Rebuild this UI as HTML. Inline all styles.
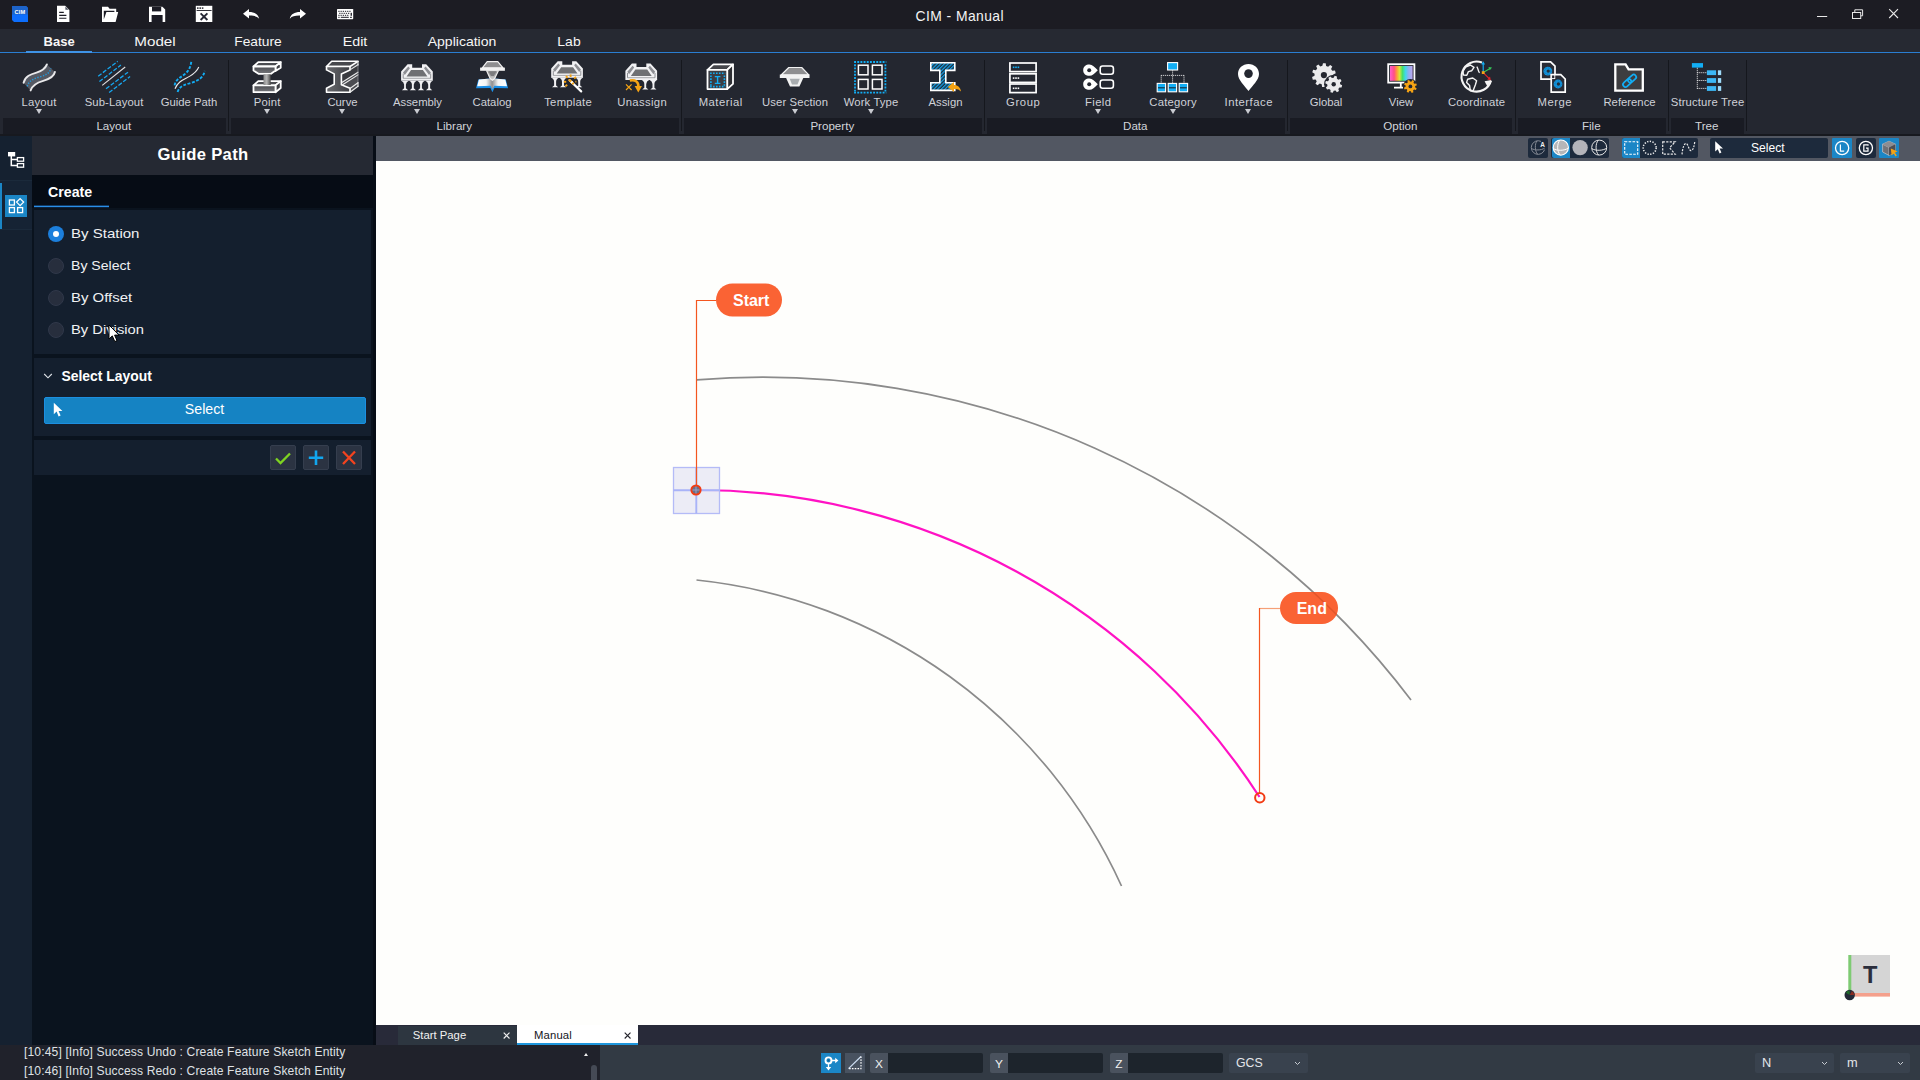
<!DOCTYPE html>
<html>
<head>
<meta charset="utf-8">
<title>CIM - Manual</title>
<style>
*{box-sizing:border-box;margin:0;padding:0}
html,body{width:1920px;height:1080px;overflow:hidden;background:#1f222c;font-family:"Liberation Sans",sans-serif;color:#e8e8ea}
.t{position:absolute;white-space:nowrap}
.b{position:absolute}
svg{position:absolute;overflow:visible}
</style>
</head>
<body>
<div class="b" style="left:0px;top:0px;width:1920px;height:29px;background:#1c1c23;"></div>
<div class="t" style="left:959.8px;top:6.88px;height:18px;line-height:18px;font-size:13.9px;color:#f4f4f4;letter-spacing:0.42px;transform:translateX(-50%);">CIM - Manual</div>
<div class="b" style="left:0px;top:29px;width:1920px;height:23px;background:#262932;"></div>
<div class="b" style="left:0px;top:53px;width:1920px;height:65px;background:#242730;"></div>
<div class="b" style="left:0px;top:118px;width:1920px;height:16px;background:#242730;"></div>
<div class="b" style="left:0px;top:134px;width:1920px;height:2px;background:#17191f;"></div>
<div class="b" style="left:0px;top:52px;width:1920px;height:1px;background:#2a7ed2;"></div>
<div class="b" style="left:26px;top:51px;width:66px;height:2px;background:#3f93e6;"></div>
<div class="t" style="left:59.1px;top:33.30px;height:17px;line-height:17px;font-size:13.0px;color:#f6f6f6;font-weight:bold;transform:translateX(-50%);">Base</div>
<div class="t" style="left:155.25px;top:34.00px;height:17px;line-height:17px;font-size:12.7px;color:#f6f6f6;transform:translateX(-50%) scaleX(1.197);">Model</div>
<div class="t" style="left:258px;top:34.00px;height:17px;line-height:17px;font-size:12.7px;color:#f6f6f6;transform:translateX(-50%) scaleX(1.085);">Feature</div>
<div class="t" style="left:355px;top:34.00px;height:17px;line-height:17px;font-size:12.7px;color:#f6f6f6;transform:translateX(-50%) scaleX(1.125);">Edit</div>
<div class="t" style="left:462px;top:34.00px;height:17px;line-height:17px;font-size:12.7px;color:#f6f6f6;transform:translateX(-50%) scaleX(1.105);">Application</div>
<div class="t" style="left:569.1px;top:34.00px;height:17px;line-height:17px;font-size:12.7px;color:#f6f6f6;transform:translateX(-50%) scaleX(1.1);">Lab</div>
<div class="b" style="left:3px;top:118px;width:223px;height:16px;background:#191b23;"></div>
<div class="t" style="left:113.8px;top:117.98px;height:15px;line-height:15px;font-size:11.6px;color:#d3d5da;transform:translateX(-50%);">Layout</div>
<div class="b" style="left:231px;top:118px;width:448px;height:16px;background:#191b23;"></div>
<div class="t" style="left:454.3px;top:117.98px;height:15px;line-height:15px;font-size:11.6px;color:#d3d5da;transform:translateX(-50%);">Library</div>
<div class="b" style="left:684px;top:118px;width:298px;height:16px;background:#191b23;"></div>
<div class="t" style="left:832.3px;top:117.98px;height:15px;line-height:15px;font-size:11.6px;color:#d3d5da;transform:translateX(-50%);">Property</div>
<div class="b" style="left:987px;top:118px;width:298px;height:16px;background:#191b23;"></div>
<div class="t" style="left:1135.3px;top:117.98px;height:15px;line-height:15px;font-size:11.6px;color:#d3d5da;transform:translateX(-50%);">Data</div>
<div class="b" style="left:1290px;top:118px;width:222px;height:16px;background:#191b23;"></div>
<div class="t" style="left:1400.3px;top:117.98px;height:15px;line-height:15px;font-size:11.6px;color:#d3d5da;transform:translateX(-50%);">Option</div>
<div class="b" style="left:1518px;top:118px;width:148px;height:16px;background:#191b23;"></div>
<div class="t" style="left:1591.3px;top:117.98px;height:15px;line-height:15px;font-size:11.6px;color:#d3d5da;transform:translateX(-50%);">File</div>
<div class="b" style="left:1671px;top:118px;width:73px;height:16px;background:#191b23;"></div>
<div class="t" style="left:1706.8px;top:117.98px;height:15px;line-height:15px;font-size:11.6px;color:#d3d5da;transform:translateX(-50%);">Tree</div>
<div class="b" style="left:228px;top:60px;width:1px;height:71px;background:#15171d;"></div>
<div class="b" style="left:681px;top:60px;width:1px;height:71px;background:#15171d;"></div>
<div class="b" style="left:984px;top:60px;width:1px;height:71px;background:#15171d;"></div>
<div class="b" style="left:1287px;top:60px;width:1px;height:71px;background:#15171d;"></div>
<div class="b" style="left:1515px;top:60px;width:1px;height:71px;background:#15171d;"></div>
<div class="b" style="left:1668px;top:60px;width:1px;height:71px;background:#15171d;"></div>
<div class="b" style="left:1746px;top:60px;width:1px;height:71px;background:#15171d;"></div>
<div class="t" style="left:39.1px;top:95.18px;height:15px;line-height:15px;font-size:11.3px;color:#cfd1d8;letter-spacing:0.2px;transform:translateX(-50%);">Layout</div>
<div class="b" style="left:35.5px;top:108.5px;width:0;height:0;border-left:3.5px solid transparent;border-right:3.5px solid transparent;border-top:5px solid #c9cbd1"></div>
<div class="t" style="left:114.05px;top:95.18px;height:15px;line-height:15px;font-size:11.3px;color:#cfd1d8;letter-spacing:0.1px;transform:translateX(-50%);">Sub-Layout</div>
<div class="t" style="left:189.0px;top:95.18px;height:15px;line-height:15px;font-size:11.3px;color:#cfd1d8;transform:translateX(-50%);">Guide Path</div>
<div class="t" style="left:267.125px;top:95.18px;height:15px;line-height:15px;font-size:11.3px;color:#cfd1d8;letter-spacing:0.25px;transform:translateX(-50%);">Point</div>
<div class="b" style="left:263.5px;top:108.5px;width:0;height:0;border-left:3.5px solid transparent;border-right:3.5px solid transparent;border-top:5px solid #c9cbd1"></div>
<div class="t" style="left:342.5px;top:95.18px;height:15px;line-height:15px;font-size:11.3px;color:#cfd1d8;transform:translateX(-50%);">Curve</div>
<div class="b" style="left:339.0px;top:108.5px;width:0;height:0;border-left:3.5px solid transparent;border-right:3.5px solid transparent;border-top:5px solid #c9cbd1"></div>
<div class="t" style="left:417.5px;top:95.18px;height:15px;line-height:15px;font-size:11.3px;color:#cfd1d8;transform:translateX(-50%);">Assembly</div>
<div class="b" style="left:414.0px;top:108.5px;width:0;height:0;border-left:3.5px solid transparent;border-right:3.5px solid transparent;border-top:5px solid #c9cbd1"></div>
<div class="t" style="left:492.0px;top:95.18px;height:15px;line-height:15px;font-size:11.3px;color:#cfd1d8;transform:translateX(-50%);">Catalog</div>
<div class="t" style="left:568.125px;top:95.18px;height:15px;line-height:15px;font-size:11.3px;color:#cfd1d8;letter-spacing:0.25px;transform:translateX(-50%);">Template</div>
<div class="t" style="left:642.175px;top:95.18px;height:15px;line-height:15px;font-size:11.3px;color:#cfd1d8;letter-spacing:0.35px;transform:translateX(-50%);">Unassign</div>
<div class="t" style="left:720.75px;top:95.18px;height:15px;line-height:15px;font-size:11.3px;color:#cfd1d8;letter-spacing:0.5px;transform:translateX(-50%);">Material</div>
<div class="t" style="left:795.06px;top:95.18px;height:15px;line-height:15px;font-size:11.3px;color:#cfd1d8;letter-spacing:0.12px;transform:translateX(-50%);">User Section</div>
<div class="b" style="left:791.5px;top:108.5px;width:0;height:0;border-left:3.5px solid transparent;border-right:3.5px solid transparent;border-top:5px solid #c9cbd1"></div>
<div class="t" style="left:871.06px;top:95.18px;height:15px;line-height:15px;font-size:11.3px;color:#cfd1d8;letter-spacing:0.12px;transform:translateX(-50%);">Work Type</div>
<div class="b" style="left:867.5px;top:108.5px;width:0;height:0;border-left:3.5px solid transparent;border-right:3.5px solid transparent;border-top:5px solid #c9cbd1"></div>
<div class="t" style="left:945.5px;top:95.18px;height:15px;line-height:15px;font-size:11.3px;color:#cfd1d8;transform:translateX(-50%);">Assign</div>
<div class="t" style="left:1023.3px;top:95.18px;height:15px;line-height:15px;font-size:11.3px;color:#cfd1d8;letter-spacing:0.6px;transform:translateX(-50%);">Group</div>
<div class="t" style="left:1098.175px;top:95.18px;height:15px;line-height:15px;font-size:11.3px;color:#cfd1d8;letter-spacing:0.35px;transform:translateX(-50%);">Field</div>
<div class="b" style="left:1094.5px;top:108.5px;width:0;height:0;border-left:3.5px solid transparent;border-right:3.5px solid transparent;border-top:5px solid #c9cbd1"></div>
<div class="t" style="left:1173.1px;top:95.18px;height:15px;line-height:15px;font-size:11.3px;color:#cfd1d8;letter-spacing:0.2px;transform:translateX(-50%);">Category</div>
<div class="b" style="left:1169.5px;top:108.5px;width:0;height:0;border-left:3.5px solid transparent;border-right:3.5px solid transparent;border-top:5px solid #c9cbd1"></div>
<div class="t" style="left:1248.75px;top:95.18px;height:15px;line-height:15px;font-size:11.3px;color:#cfd1d8;letter-spacing:0.5px;transform:translateX(-50%);">Interface</div>
<div class="b" style="left:1245.0px;top:108.5px;width:0;height:0;border-left:3.5px solid transparent;border-right:3.5px solid transparent;border-top:5px solid #c9cbd1"></div>
<div class="t" style="left:1326.0px;top:95.18px;height:15px;line-height:15px;font-size:11.3px;color:#cfd1d8;transform:translateX(-50%);">Global</div>
<div class="t" style="left:1401.0px;top:95.18px;height:15px;line-height:15px;font-size:11.3px;color:#cfd1d8;transform:translateX(-50%);">View</div>
<div class="t" style="left:1476.6px;top:95.18px;height:15px;line-height:15px;font-size:11.3px;color:#cfd1d8;letter-spacing:0.2px;transform:translateX(-50%);">Coordinate</div>
<div class="t" style="left:1554.75px;top:95.18px;height:15px;line-height:15px;font-size:11.3px;color:#cfd1d8;letter-spacing:0.5px;transform:translateX(-50%);">Merge</div>
<div class="t" style="left:1629.5px;top:95.18px;height:15px;line-height:15px;font-size:11.3px;color:#cfd1d8;transform:translateX(-50%);">Reference</div>
<div class="t" style="left:1707.575px;top:95.18px;height:15px;line-height:15px;font-size:11.3px;color:#cfd1d8;letter-spacing:0.15px;transform:translateX(-50%);">Structure Tree</div>
<svg style="left:0;top:0" width="1920" height="30" viewBox="0 0 1920 30">
<!-- CIM logo -->
<path d="M12 6 H26 L28 8 V22 H14 L12 20 Z" fill="#0d6efd"/>
<path d="M12 6 H26 L28 8 V14.5 H12 Z" fill="#1d63c8"/>
<text x="20" y="13.6" font-family="Liberation Sans, sans-serif" font-weight="bold" font-size="5.6" fill="#fff" text-anchor="middle" letter-spacing="0.3">CIM</text>
<!-- new doc -->
<path d="M57 5.8 H65.2 L69.4 10 V22 H57 Z" fill="#fff"/>
<path d="M65.4 6.4 V9.8 H68.8 Z" fill="#555a66"/>
<path d="M59.2 12.4 H63.8 M59.2 15.4 H66.4 M59.2 18.3 H66.4" stroke="#1b1b24" stroke-width="1.1"/>
<!-- open folder -->
<path d="M102 6.8 H108 L109.6 8.8 H116.2 V12 H118.2 L115.6 22 H102 Z" fill="#fff"/>
<path d="M103.8 10.8 H114.4 V12 H106.4 L103.8 19.6 Z" fill="#1b1b24"/>
<!-- save -->
<path d="M149 6.8 H162.4 L165.2 9.6 V22 H149 Z" fill="#fff"/>
<rect x="152" y="6.8" width="9.2" height="4.6" fill="#1b1b24"/>
<rect x="151.6" y="15" width="11" height="7" fill="#1b1b24"/>
<!-- close window -->
<rect x="195.8" y="5.8" width="16.5" height="16.2" fill="#fff"/>
<rect x="197" y="7.4" width="1.6" height="1.4" fill="#1b1b24"/><rect x="199.4" y="7.4" width="1.6" height="1.4" fill="#1b1b24"/><rect x="201.8" y="7.4" width="1.6" height="1.4" fill="#1b1b24"/>
<rect x="196.6" y="10" width="15" height="0.9" fill="#1b1b24"/>
<path d="M200.6 13.4 L207.4 20 M207.4 13.4 L200.6 20" stroke="#262835" stroke-width="1.9"/>
<!-- undo -->
<path d="M243 13.8 L249 9 V12 C254.5 12 258.2 14.2 259.2 18.7 C256.8 16.1 253.8 15.5 249 15.6 V18.6 Z" fill="#fff"/>
<!-- redo -->
<path d="M306 13.8 L300 9 V12 C294.5 12 290.8 14.2 289.8 18.7 C292.2 16.1 295.2 15.5 300 15.6 V18.6 Z" fill="#fff"/>
<!-- keyboard -->
<rect x="337" y="9" width="16.2" height="10.2" rx="0.6" fill="#fff"/>
<g fill="#1b1b24">
<rect x="338.3" y="10.8" width="1.3" height="1"/><rect x="340.5" y="10.8" width="1.3" height="1"/><rect x="342.7" y="10.8" width="1.3" height="1"/><rect x="344.9" y="10.8" width="1.3" height="1"/><rect x="347.1" y="10.8" width="1.3" height="1"/><rect x="349.3" y="10.8" width="1.3" height="1"/>
<rect x="339.2" y="12.8" width="1.3" height="1"/><rect x="341.4" y="12.8" width="1.3" height="1"/><rect x="343.6" y="12.8" width="1.3" height="1"/><rect x="345.8" y="12.8" width="1.3" height="1"/><rect x="348" y="12.8" width="1.3" height="1"/>
<rect x="338.3" y="14.8" width="1.3" height="1"/><rect x="340.5" y="14.8" width="1.3" height="1"/><rect x="342.7" y="14.8" width="1.3" height="1"/><rect x="344.9" y="14.8" width="1.3" height="1"/><rect x="347.1" y="14.8" width="1.3" height="1"/>
<rect x="350.6" y="12.8" width="1.3" height="3"/>
<rect x="338.3" y="16.8" width="1.3" height="1"/><rect x="340.8" y="16.8" width="8" height="1"/><rect x="350" y="16.8" width="1.9" height="1"/>
</g>
<!-- window controls -->
<path d="M1817 16.5 H1827.2" stroke="#e8e8e8" stroke-width="1"/>
<path d="M1854.8 12 V9.8 H1862.6 V15.8 H1861" fill="none" stroke="#e8e8e8" stroke-width="1"/>
<rect x="1852.5" y="12.5" width="8.2" height="6" fill="none" stroke="#e8e8e8" stroke-width="1"/>
<path d="M1889.2 9.2 L1898 18 M1898 9.2 L1889.2 18" stroke="#e8e8e8" stroke-width="1.1"/>
</svg><svg style="left:0;top:53px" width="1920" height="82" viewBox="0 53 1920 82"><defs>
<linearGradient id="gcol" x1="0" x2="1" y1="0" y2="0"><stop offset="0" stop-color="#8a8a8a"/><stop offset="0.45" stop-color="#b5b5b5"/><stop offset="1" stop-color="#4a4a4a"/></linearGradient>
<linearGradient id="gdk" x1="0" x2="0" y1="0" y2="1"><stop offset="0" stop-color="#4a4b50"/><stop offset="1" stop-color="#77787c"/></linearGradient>
<linearGradient id="gdk2" x1="0" x2="1" y1="0" y2="0"><stop offset="0" stop-color="#6a6b6f"/><stop offset="1" stop-color="#3c3d42"/></linearGradient>
<linearGradient id="gweb" x1="0" x2="0" y1="0" y2="1"><stop offset="0" stop-color="#8a8a8a"/><stop offset="1" stop-color="#d8d8d8"/></linearGradient>
<linearGradient id="gbook" x1="0" x2="1" y1="0" y2="0"><stop offset="0" stop-color="#ffffff"/><stop offset="0.3" stop-color="#f4f4f4"/><stop offset="0.5" stop-color="#909092"/><stop offset="0.7" stop-color="#f4f4f4"/><stop offset="1" stop-color="#ffffff"/></linearGradient>
<linearGradient id="grain" x1="0" x2="1" y1="0" y2="0"><stop offset="0" stop-color="#ff5fd0"/><stop offset="0.18" stop-color="#ff4f86"/><stop offset="0.30" stop-color="#ff9a3c"/><stop offset="0.42" stop-color="#d8e83a"/><stop offset="0.55" stop-color="#45e06a"/><stop offset="0.68" stop-color="#3fd8e8"/><stop offset="0.82" stop-color="#8fb0f0"/><stop offset="1" stop-color="#c0a8f0"/></linearGradient>
</defs><path d="M23.6 82.8 C25 76 31 74.2 36.5 72.6 C42.5 70.8 45.2 69 46.9 64.4 L54.9 72 C53.8 77.6 48.4 79.4 43.2 80.8 C37.4 82.4 32.6 84.4 30.6 90.4 Z" fill="#555963"/>
<path d="M23.6 82.8 C25 76 31 74.2 36.5 72.6 C42.5 70.8 45.2 69 46.9 64.4" fill="none" stroke="#e9e9eb" stroke-width="1.9" stroke-linecap="round"/>
<path d="M30.6 90.4 C32.6 84.4 37.4 82.4 43.2 80.8 C48.4 79.4 53.8 77.6 54.9 72" fill="none" stroke="#e9e9eb" stroke-width="1.9" stroke-linecap="round"/>
<path d="M27.2 86.4 C28.8 80.4 34.4 78.4 40 76.8 C45.6 75.2 49.6 73.4 50.9 68.4" fill="none" stroke="#1f9be0" stroke-width="1.4" stroke-dasharray="1.3 1.5"/><g stroke="#17a6ee" stroke-width="1.3" stroke-dasharray="4.2 1.7" fill="none">
<path d="M98.2 76.2 L117.7 61.3"/><path d="M99.4 81.6 L120.9 65.1"/><path d="M106 88.8 L128 72.2"/><path d="M109.1 92.6 L130.1 76.5"/></g>
<path d="M102.2 85.4 L125.2 67" stroke="#e2e2e4" stroke-width="1.1"/><path d="M175 88.8 C178 80.8 184.5 79.4 189.5 76.4 C194.2 73.6 197 71.2 198.8 67" fill="none" stroke="#e8e8ea" stroke-width="1.1"/>
<g fill="none" stroke="#12aef5" stroke-width="1.9" stroke-dasharray="2.9 1.6" stroke-linecap="butt">
<path d="M174.6 85.4 C175.4 79.4 181 77.4 185.4 73.6 C189.4 70.2 190.6 66.4 191.3 61.6"/>
<path d="M177.6 92 C179.4 85.6 185.6 84.6 192 82.6 C198.6 80.4 203.6 77.4 204.7 70.8"/></g><g stroke="#fff" stroke-width="1.8" stroke-linejoin="round">
<polygon points="253.5,66.5 258.3,62.1 280.7,62.1 275.5,66.5" fill="#4b4c51"/>
<polygon points="275.5,66.5 280.7,62.1 280.7,67.8 275.5,71.0" fill="#3f4046"/>
<polygon points="253.5,66.5 275.5,66.5 275.5,70.5 270.7,73.9 258.9,73.9 253.5,70.5" fill="url(#gdk)"/>
<polygon points="253.5,85.4 258.3,81.1 280.7,81.1 275.5,85.4" fill="#4b4c51"/>
<polygon points="275.5,85.4 280.7,81.1 280.7,88.0 275.5,92.2" fill="#3f4046"/>
<polygon points="253.5,85.4 275.5,85.4 275.5,92.2 253.5,92.2" fill="url(#gdk)"/>
</g>
<polygon points="263.5,74.3 270.7,74.3 270.7,85.0 263.5,85.0" fill="url(#gcol)"/><polygon points="350.0,66.5 358.0,61.3 358.0,85.9 350.0,92.2 350.0,88.2 341.4,84.8 341.4,73.9 350.0,69.9" fill="#4b4c51"/>
<polygon points="341.4,73.9 350.0,69.3 358.0,64.7 358.0,72.2 342.0,82.5" fill="#3a3b40"/>
<g stroke="#fff" stroke-width="1.6" stroke-linejoin="round">
<polygon points="326.5,66.5 331.7,61.3 358.0,61.3 350.0,66.5" fill="#47484d"/>
<polygon points="326.5,66.5 350.0,66.5 350.0,69.9 341.4,73.9 341.4,84.8 350.0,88.2 350.0,92.2 326.5,92.2 326.5,88.2 334.2,84.2 334.2,73.9 326.5,69.9" fill="url(#gdk2)"/>
</g>
<g stroke="#ededed" stroke-width="1.1" fill="none" stroke-linecap="round">
<path d="M350.0 69.9 L358.0 64.7"/><path d="M342.2 82.3 L358.0 72.2"/><path d="M342.2 85.0 L358.0 74.9"/><path d="M350.0 88.5 L358.0 82.7"/><path d="M350.0 92.2 L358.0 86.2"/>
<path d="M358.0 61.3 L358.0 65.1"/><path d="M358.0 82.5 L358.0 86.2"/>
</g>
<path d="M358.0 65.1 L358.0 82.5" stroke="#9a9a9e" stroke-width="0.7"/><polygon points="407.6,64.2 412.2,64.2 412.2,67.7 422.0,67.7 422.0,64.2 426.2,64.2 432.8,71.4 432.8,80.6 401.1,80.6 401.1,71.4" fill="#f1f1f3"/>
<polygon points="403.0,72.4 408.3,66.4 409.9,68.2 404.8,74.9" fill="#8d8e93"/>
<polygon points="430.9,72.4 425.6,66.4 424.0,68.2 429.1,74.9" fill="#8d8e93"/>
<polygon points="406.6,76.5 411.1,70.1 422.9,70.1 427.4,76.5" fill="#6f7073"/>
<path d="M403.2 78.3 H430.7" stroke="#85868b" stroke-width="0.7"/>
<path d="M403.2 73.6 V78.3 M430.7 73.6 V78.3" stroke="#77787d" stroke-width="0.8"/><path d="M400.9 80.4 Q403.9 81.6 404.1 84.6 V88.3 L401.9 90.2 H408.1 L405.9 88.3 V84.6 Q406.1 81.6 409.1 80.4 Z" fill="#f1f1f3"/><path d="M408.8 80.4 Q411.8 81.6 411.9 84.6 V88.3 L409.8 90.2 H416.0 L413.8 88.3 V84.6 Q414.0 81.6 417.0 80.4 Z" fill="#f1f1f3"/><path d="M416.9 80.4 Q419.9 81.6 420.1 84.6 V88.3 L417.9 90.2 H424.1 L421.9 88.3 V84.6 Q422.1 81.6 425.1 80.4 Z" fill="#f1f1f3"/><path d="M425.0 80.4 Q428.0 81.6 428.2 84.6 V88.3 L426.0 90.2 H432.2 L430.1 88.3 V84.6 Q430.2 81.6 433.2 80.4 Z" fill="#f1f1f3"/><polygon points="557.7,61.3 562.3,61.3 562.3,64.8 572.1,64.8 572.1,61.3 576.3,61.3 582.9,68.5 582.9,77.7 551.2,77.7 551.2,68.5" fill="#f1f1f3"/>
<polygon points="553.1,69.5 558.4,63.5 560.0,65.3 554.9,72.0" fill="#8d8e93"/>
<polygon points="581.0,69.5 575.7,63.5 574.1,65.3 579.2,72.0" fill="#8d8e93"/>
<polygon points="556.7,73.6 561.2,67.2 573.0,67.2 577.5,73.6" fill="#6f7073"/>
<path d="M553.3 75.4 H580.8" stroke="#85868b" stroke-width="0.7"/>
<path d="M553.3 70.7 V75.4 M580.8 70.7 V75.4" stroke="#77787d" stroke-width="0.8"/><path d="M551.0 77.5 Q554.0 78.7 554.1 81.7 V85.4 L552.0 87.3 H558.2 L556.1 85.4 V81.7 Q556.2 78.7 559.2 77.5 Z" fill="#f1f1f3"/><path d="M558.9 77.5 Q561.9 78.7 562.0 81.7 V85.4 L559.9 87.3 H566.1 L564.0 85.4 V81.7 Q564.1 78.7 567.1 77.5 Z" fill="#f1f1f3"/><path d="M575.1 77.5 Q578.1 78.7 578.2 81.7 V85.4 L576.1 87.3 H582.3 L580.2 85.4 V81.7 Q580.3 78.7 583.3 77.5 Z" fill="#f1f1f3"/><path d="M569.6 80.2 L581.2 91.4" stroke="#fff" stroke-width="2.2" stroke-linecap="round"/>
<path d="M569.6 80.2 L573 83.5" stroke="#f5a314" stroke-width="2.4" stroke-linecap="round"/>
<path d="M571.2 81.7 L572.4 82.9" stroke="#fff" stroke-width="2.4"/>
<g stroke="#f5a314" stroke-width="1.9" stroke-linecap="butt"><path d="M570.6 74.4 V77"/><path d="M566 76 L567.6 77.8"/><path d="M574.2 78.4 L576 77"/><path d="M563.8 81.8 H566.2"/><path d="M565.4 86.4 L567.2 84.8"/><path d="M575.4 81.6 H576.4"/></g><polygon points="631.9,63.6 636.5,63.6 636.5,67.1 646.3,67.1 646.3,63.6 650.5,63.6 657.1,70.8 657.1,80.0 625.4,80.0 625.4,70.8" fill="#f1f1f3"/>
<polygon points="627.3,71.8 632.6,65.8 634.2,67.6 629.1,74.3" fill="#8d8e93"/>
<polygon points="655.2,71.8 649.9,65.8 648.3,67.6 653.4,74.3" fill="#8d8e93"/>
<polygon points="630.9,75.9 635.4,69.5 647.2,69.5 651.7,75.9" fill="#6f7073"/>
<path d="M627.5 77.7 H655.0" stroke="#85868b" stroke-width="0.7"/>
<path d="M627.5 73.0 V77.7 M655.0 73.0 V77.7" stroke="#77787d" stroke-width="0.8"/><path d="M641.2 79.8 Q644.2 81.0 644.3 84.0 V87.7 L642.2 89.6 H648.4 L646.2 87.7 V84.0 Q646.4 81.0 649.4 79.8 Z" fill="#f1f1f3"/><path d="M649.3 79.8 Q652.3 81.0 652.5 84.0 V87.7 L650.3 89.6 H656.5 L654.4 87.7 V84.0 Q654.5 81.0 657.5 79.8 Z" fill="#f1f1f3"/><path d="M629.8 80.6 C635 79.4 638.6 81.6 638.4 86.6" fill="none" stroke="#f5a314" stroke-width="2.6"/>
<path d="M634.6 86 H642 L638.3 92.6 Z" fill="#f5a314"/>
<path d="M626 84.4 L631.6 90 M631.6 84.4 L626 90" stroke="#f5a314" stroke-width="1.2"/><polygon points="476.0,88.2 478.3,79.4 490.4,78.5 492.4,79.6 494.4,78.5 505.8,79.4 508.1,88.2 494.4,87.9 492.4,92.2 490.4,87.9" fill="#1b8fe8"/>
<polygon points="477.2,86.2 478.9,79.4 490.4,78.5 492.4,79.6 494.4,78.5 505.3,79.4 507.0,86.2 494.4,85.7 492.4,89.4 490.4,85.7" fill="url(#gbook)"/>
<polygon points="482.3,67.8 487.2,61.6 497.8,61.6 503.0,67.8" fill="#8e8e90" stroke="#f2f2f2" stroke-width="1.2" stroke-linejoin="round"/>
<polygon points="480.1,67.6 504.9,67.6 504.9,70.8 480.1,70.8" fill="#f2f2f2"/>
<polygon points="486.6,70.8 498.4,70.8 494.7,78.5 492.4,80.4 490.1,78.5" fill="url(#gweb)" stroke="#f2f2f2" stroke-width="1.1" stroke-linejoin="round"/>
<polygon points="488.6,71.3 496.3,71.3 493.9,75.9 490.9,75.9" fill="#7c7c7e"/><g stroke="#fff" stroke-width="1.8" stroke-linejoin="round">
<polygon points="707.5,69.8 713.4,64.4 733.0,64.4 727.2,69.8" fill="#45464b"/>
<polygon points="727.2,69.8 733.0,64.4 733.0,83.9 727.2,89.1" fill="#2e2f34"/>
<polygon points="707.5,69.8 727.2,69.8 727.2,89.1 707.5,89.1" fill="#3b3d44"/>
</g>
<g stroke="#12aef5" stroke-width="1.6" stroke-dasharray="1.6 1.35" fill="none"><path d="M710.1 73.2 H725.2"/><path d="M710.1 86.6 H725.2"/><path d="M710.9 75.4 V85.8"/><path d="M724.4 75.4 V85.8"/></g>
<path d="M714.8 76.6 H720.4 M714.8 83.4 H720.4 M717.6 76.6 V83.4" stroke="#12aef5" stroke-width="1.4" fill="none"/><polygon points="781.4,74.8 788.8,67.5 801.7,67.5 808.8,74.8" fill="#8e8e90" stroke="#f2f2f2" stroke-width="1.2" stroke-linejoin="round"/>
<polygon points="779.8,74.5 809.5,74.5 809.5,78.0 779.8,78.0" fill="#f2f2f2"/>
<polygon points="786.1,78.0 803.3,78.0 799.4,86.6 790.0,86.6" fill="#f2f2f2"/>
<polygon points="789.7,78.8 799.8,78.8 797.5,84.4 792.0,84.4" fill="#a9adb0"/><g stroke="#12aef5" stroke-width="1.8" stroke-dasharray="1.9 1.27" fill="none"><path d="M854.1 62 H886.3"/><path d="M854.1 92.6 H886.3"/><path d="M855 64.3 V91.7"/><path d="M885.4 64.3 V91.7"/></g>
<g fill="none" stroke="#fff" stroke-width="1.5"><rect x="858.4" y="65.2" width="9.6" height="9.6"/><rect x="872.4" y="65.2" width="9.6" height="9.6"/><rect x="858.4" y="79.4" width="9.6" height="9.6"/><rect x="872.4" y="79.4" width="9.6" height="9.6"/></g><defs><pattern id="hat" width="2.6" height="2.6" patternUnits="userSpaceOnUse" patternTransform="rotate(-45)"><rect width="2.6" height="2.6" fill="#202a36"/><rect width="2.6" height="1.3" fill="#14a2ea"/></pattern></defs>
<path d="M930.8 62.8 H954.8 V70.4 H945.8 V82.8 H954.8 V90.4 H930.8 V82.8 H939.8 V70.4 H930.8 Z" fill="url(#hat)" stroke="#fff" stroke-width="1.6" stroke-linejoin="miter"/>
<path d="M947.8 87 L954 82 V85 C958 85 960.4 87.4 961 91.6 C959.2 89.4 957.4 88.8 954 88.9 V92 Z" fill="#f5a314"/><rect x="1009.9" y="63.0" width="26.2" height="8.6" fill="#242730" stroke="#fff" stroke-width="1.7"/><rect x="1012.8" y="66.5" width="1.6" height="1.6" fill="#12aef5"/><rect x="1015.1999999999999" y="66.5" width="1.6" height="1.6" fill="#12aef5"/><rect x="1017.5999999999999" y="66.5" width="1.6" height="1.6" fill="#12aef5"/><rect x="1009.9" y="73.8" width="26.2" height="8.6" fill="#242730" stroke="#fff" stroke-width="1.7"/><rect x="1012.8" y="77.3" width="1.6" height="1.6" fill="#fff"/><rect x="1015.1999999999999" y="77.3" width="1.6" height="1.6" fill="#fff"/><rect x="1017.5999999999999" y="77.3" width="1.6" height="1.6" fill="#fff"/><rect x="1009.9" y="84.0" width="26.2" height="8.6" fill="#242730" stroke="#fff" stroke-width="1.7"/><rect x="1012.8" y="87.5" width="1.6" height="1.6" fill="#fff"/><rect x="1015.1999999999999" y="87.5" width="1.6" height="1.6" fill="#fff"/><rect x="1017.5999999999999" y="87.5" width="1.6" height="1.6" fill="#fff"/><path d="M1083.2 70.19999999999999 C1083.2 66.6 1086 64.6 1089.4 64.6 C1092.4 64.6 1094.6 67.19999999999999 1097.8 70.19999999999999 C1094.6 73.19999999999999 1092.4 75.8 1089.4 75.8 C1086 75.8 1083.2 73.8 1083.2 70.19999999999999 Z" fill="#fff"/><circle cx="1089.2" cy="70.19999999999999" r="2" fill="#242730"/><rect x="1100.2" y="66.0" width="13.2" height="8.2" rx="2.4" fill="none" stroke="#fff" stroke-width="1.6"/><path d="M1083.2 84.19999999999999 C1083.2 80.6 1086 78.6 1089.4 78.6 C1092.4 78.6 1094.6 81.19999999999999 1097.8 84.19999999999999 C1094.6 87.19999999999999 1092.4 89.8 1089.4 89.8 C1086 89.8 1083.2 87.8 1083.2 84.19999999999999 Z" fill="#fff"/><circle cx="1089.2" cy="84.19999999999999" r="2" fill="#242730"/><rect x="1100.2" y="80.0" width="13.2" height="8.2" rx="2.4" fill="none" stroke="#fff" stroke-width="1.6"/><rect x="1167.6" y="62.6" width="10" height="7.4" fill="#12aef5" stroke="#fff" stroke-width="1.1"/><g stroke="#f0f0f0" stroke-width="1" stroke-dasharray="1 1" fill="none"><path d="M1172.6 70.4 V83"/><path d="M1161.2 75.4 H1184"/><path d="M1161.2 75.4 V83"/><path d="M1184 75.4 V83"/></g><rect x="1157.2" y="83.4" width="8.4" height="8.4" fill="#12aef5" stroke="#fff" stroke-width="1.1"/><path d="M1158.0 87.8 H1164.8" stroke="#1b2630" stroke-width="1.1"/><rect x="1168.2" y="83.4" width="8.4" height="8.4" fill="#12aef5" stroke="#fff" stroke-width="1.1"/><path d="M1169.0 87.8 H1175.8" stroke="#1b2630" stroke-width="1.1"/><rect x="1179.2" y="83.4" width="8.4" height="8.4" fill="#12aef5" stroke="#fff" stroke-width="1.1"/><path d="M1180.0 87.8 H1186.8" stroke="#1b2630" stroke-width="1.1"/><path d="M1248.5 91 C1244.5 85.6 1238 80 1238 74 C1238 68.3 1242.7 64 1248.5 64 C1254.3 64 1259 68.3 1259 74 C1259 80 1252.5 85.6 1248.5 91 Z" fill="#fff"/>
<circle cx="1248.5" cy="73.6" r="4.3" fill="#242730"/><polygon points="1333.19,76.50 1335.56,77.93 1334.63,80.47 1331.90,80.03 1330.59,81.70 1331.67,84.24 1329.42,85.75 1327.48,83.79 1325.44,84.37 1324.81,87.07 1322.11,86.97 1321.68,84.24 1319.69,83.51 1317.61,85.32 1315.48,83.65 1316.74,81.19 1315.55,79.43 1312.80,79.67 1312.06,77.06 1314.53,75.82 1314.61,73.70 1312.24,72.27 1313.17,69.73 1315.90,70.17 1317.21,68.50 1316.13,65.96 1318.38,64.45 1320.32,66.41 1322.36,65.83 1322.99,63.13 1325.69,63.23 1326.12,65.96 1328.11,66.69 1330.19,64.88 1332.32,66.55 1331.06,69.01 1332.25,70.77 1335.00,70.53 1335.74,73.14 1333.27,74.38" fill="#ebebed"/><circle cx="1323.9" cy="75.1" r="3.1" fill="#242730"/><circle cx="1333.7" cy="84.3" r="9.6" fill="#242730"/><polygon points="1340.20,84.30 1342.15,85.23 1341.55,87.55 1339.40,87.43 1338.30,88.90 1339.01,90.93 1336.95,92.15 1335.51,90.54 1333.70,90.80 1332.77,92.75 1330.45,92.15 1330.57,90.00 1329.10,88.90 1327.07,89.61 1325.85,87.55 1327.46,86.11 1327.20,84.30 1325.25,83.37 1325.85,81.05 1328.00,81.17 1329.10,79.70 1328.39,77.67 1330.45,76.45 1331.89,78.06 1333.70,77.80 1334.63,75.85 1336.95,76.45 1336.83,78.60 1338.30,79.70 1340.33,78.99 1341.55,81.05 1339.94,82.49" fill="#ebebed"/><circle cx="1333.7" cy="84.3" r="2.2" fill="#242730"/><rect x="1388.2" y="64.2" width="26.2" height="18.4" fill="#242730" stroke="#fff" stroke-width="1.8"/>
<rect x="1390" y="66" width="22.6" height="14.8" fill="url(#grain)"/>
<path d="M1400.8 83 V87.4 M1394 87.6 H1403" stroke="#fff" stroke-width="1.8" fill="none"/><circle cx="1410.4" cy="86.4" r="7.4" fill="#242730"/><polygon points="1415.10,87.35 1416.69,88.41 1415.87,90.09 1414.06,89.50 1413.05,90.40 1413.42,92.27 1411.66,92.88 1410.80,91.18 1409.45,91.10 1408.39,92.69 1406.71,91.87 1407.30,90.06 1406.40,89.05 1404.53,89.42 1403.92,87.66 1405.62,86.80 1405.70,85.45 1404.11,84.39 1404.93,82.71 1406.74,83.30 1407.75,82.40 1407.38,80.53 1409.14,79.92 1410.00,81.62 1411.35,81.70 1412.41,80.11 1414.09,80.93 1413.50,82.74 1414.40,83.75 1416.27,83.38 1416.88,85.14 1415.18,86.00" fill="#f5a314"/><circle cx="1410.4" cy="86.4" r="1.9" fill="#242730"/><path d="M1482 62.6 A15 15 0 1 0 1491 80.6" fill="none" stroke="#f4f4f4" stroke-width="2.1"/>
<path d="M1487.4 86.6 L1491.4 80 L1484.6 81.2 Z" fill="#f4f4f4"/>
<path d="M1465.6 67.2 L1470.4 65 L1474 67.4 L1471.6 70.8 L1468.4 71.6 L1466.8 75.2 L1463.4 75 L1463 71 Z" fill="none" stroke="#f4f4f4" stroke-width="1.4" stroke-linejoin="round"/>
<path d="M1467.6 79.2 L1472.8 78 L1476.6 80.8 L1475.4 84.8 L1473.2 90.6 L1470.4 90.8 L1469.6 85.6 L1466.6 82.4 Z" fill="none" stroke="#f4f4f4" stroke-width="1.4" stroke-linejoin="round"/>
<path d="M1476.8 66.6 C1478.4 68.6 1478 71.4 1479.6 72.8" fill="none" stroke="#f4f4f4" stroke-width="1.4"/>
<path d="M1483.2 72.6 V63" stroke="#12aef5" stroke-width="1.2"/><path d="M1481.4 64.4 L1483.2 61.2 L1485 64.4 Z" fill="#12aef5"/>
<path d="M1483.2 72.6 L1490 68.6" stroke="#34c759" stroke-width="1.2"/><path d="M1488.4 67 L1492 67.4 L1489.8 70.2 Z" fill="#34c759"/>
<path d="M1483.2 72.6 L1489 78.4" stroke="#e0242a" stroke-width="1.2"/><path d="M1487.2 79.4 L1490.8 80.2 L1490 76.6 Z" fill="#e0242a"/>
<rect x="1481.8" y="71.2" width="2.8" height="2.8" fill="#f5a314"/><path d="M1541 61.8 H1550.6 L1555 66.2 V79.19999999999999 H1541 Z" fill="#2a2d36" stroke="#fff" stroke-width="1.7" stroke-linejoin="miter"/><circle cx="1547.8" cy="71.1" r="4.4" fill="#1497e0"/><circle cx="1548.2" cy="71.1" r="1.7" fill="#22303c"/><circle cx="1547.8" cy="71.1" r="3.1" fill="none" stroke="#0e78b8" stroke-width="1.4" stroke-dasharray="0.8 0.8"/><path d="M1551.2 74.6 H1560.8 L1565.2 79.0 V92.19999999999999 H1551.2 Z" fill="#2a2d36" stroke="#fff" stroke-width="1.7" stroke-linejoin="miter"/><circle cx="1558.0" cy="83.99999999999999" r="4.4" fill="#1497e0"/><circle cx="1558.4" cy="83.99999999999999" r="1.7" fill="#22303c"/><circle cx="1558.0" cy="83.99999999999999" r="3.1" fill="none" stroke="#0e78b8" stroke-width="1.4" stroke-dasharray="0.8 0.8"/><rect x="1551.6" y="75" width="3.2" height="3.6" fill="#242730" stroke="#fff" stroke-width="0.9"/><path d="M1615.3 64.3 H1625.6 L1628.6 69.4 H1642.8 V90.7 H1615.3 Z" fill="#3d3d40" stroke="#fff" stroke-width="2.3" stroke-linejoin="miter"/>
<g fill="none" stroke="#12aef5" stroke-width="1.7" transform="rotate(-42 1629.6 80.8)">
<rect x="1621.6" y="78.3" width="9.4" height="5" rx="2.5"/>
<rect x="1628.2" y="78.3" width="9.4" height="5" rx="2.5"/></g><rect x="1691.9" y="63.1" width="11.1" height="4.5" fill="#12aef5"/><g stroke="#f0f0f0" stroke-width="1" stroke-dasharray="1 1" fill="none"><path d="M1697.3 67.8 V88.8"/><path d="M1697.3 72.7 H1706.4"/><path d="M1697.3 80.5 H1706.4"/><path d="M1697.3 88.4 H1706.4"/></g><rect x="1706.9" y="70.3" width="9.2" height="4.8" fill="#3cb8f6"/><rect x="1717.9" y="70.3" width="3.3" height="4.8" fill="#9fdcfb"/><rect x="1706.9" y="78.1" width="9.2" height="4.8" fill="#3cb8f6"/><rect x="1717.9" y="78.1" width="3.3" height="4.8" fill="#9fdcfb"/><rect x="1706.9" y="86.1" width="9.2" height="4.8" fill="#3cb8f6"/><rect x="1717.9" y="86.1" width="3.3" height="4.8" fill="#9fdcfb"/></svg>
<div class="b" style="left:0px;top:136px;width:32px;height:909px;background:#152130;"></div>
<div class="b" style="left:32px;top:136px;width:344px;height:909px;background:#0a131e;"></div>
<div class="b" style="left:32px;top:136px;width:341px;height:39px;background:#252933;"></div>
<div class="t" style="left:203px;top:143.85px;height:22px;line-height:22px;font-size:16.6px;color:#ffffff;font-weight:bold;letter-spacing:0.35px;transform:translateX(-50%);">Guide Path</div>
<div class="b" style="left:32px;top:175px;width:344px;height:33px;background:#060c15;"></div>
<div class="b" style="left:373px;top:136px;width:3px;height:909px;background:#070d16;"></div>
<div class="t" style="left:48px;top:183.08px;height:18px;line-height:18px;font-size:14.2px;color:#ffffff;font-weight:bold;">Create</div>
<div class="b" style="left:34px;top:206px;width:75px;height:1px;background:#2a8ee6;"></div>
<div class="b" style="left:34px;top:205px;width:75px;height:1px;background:#123a63;"></div>
<div class="b" style="left:34px;top:207px;width:75px;height:1px;background:#0c2440;"></div>
<div class="b" style="left:34px;top:210px;width:337px;height:144px;background:#141f2e;"></div>
<div class="b" style="left:34px;top:357.5px;width:337px;height:78.5px;background:#141f2e;"></div>
<div class="b" style="left:34px;top:439.5px;width:337px;height:35.5px;background:#141f2e;"></div>
<div class="b" style="left:48px;top:226px;width:16px;height:16px;border-radius:50%;background:#1c7fdc"></div>
<div class="b" style="left:53px;top:231px;width:6px;height:6px;border-radius:50%;background:#fff"></div>
<div class="t" style="left:71.1px;top:224.69px;height:18px;line-height:18px;font-size:13.6px;color:#f0f1f3;transform-origin:0 50%;transform:scaleX(1.105);">By Station</div>
<div class="b" style="left:48px;top:258px;width:16px;height:16px;border-radius:50%;background:#272e3d;border:1px solid #30384a"></div>
<div class="t" style="left:71.1px;top:256.69px;height:18px;line-height:18px;font-size:13.6px;color:#f0f1f3;transform-origin:0 50%;transform:scaleX(1.035);">By Select</div>
<div class="b" style="left:48px;top:290px;width:16px;height:16px;border-radius:50%;background:#272e3d;border:1px solid #30384a"></div>
<div class="t" style="left:71.1px;top:288.69px;height:18px;line-height:18px;font-size:13.6px;color:#f0f1f3;transform-origin:0 50%;transform:scaleX(1.1);">By Offset</div>
<div class="b" style="left:48px;top:322px;width:16px;height:16px;border-radius:50%;background:#272e3d;border:1px solid #30384a"></div>
<div class="t" style="left:71.1px;top:320.69px;height:18px;line-height:18px;font-size:13.6px;color:#f0f1f3;transform-origin:0 50%;transform:scaleX(1.085);">By Division</div>
<svg style="left:43px;top:371px" width="10" height="10" viewBox="0 0 10 10"><path d="M1.2 3 L5 6.8 L8.8 3" fill="none" stroke="#dfe3e8" stroke-width="1.1"/></svg>
<div class="t" style="left:61.5px;top:366.78px;height:18px;line-height:18px;font-size:13.9px;color:#ffffff;font-weight:bold;">Select Layout</div>
<div class="b" style="left:44px;top:396.5px;width:322px;height:27px;background:#1583c3;border:1px solid #1c8fe0;border-radius:2px"></div>
<div class="t" style="left:204.5px;top:399.68px;height:18px;line-height:18px;font-size:14.2px;color:#ffffff;transform:translateX(-50%);">Select</div>
<svg style="left:53px;top:402px" width="11" height="16" viewBox="0 0 11 16"><path d="M0.8 0.8 L0.8 12.2 L3.6 9.6 L5.6 14.4 L7.6 13.5 L5.6 8.9 L9.4 8.9 Z" fill="#fff"/></svg>
<div class="b" style="left:270px;top:444.5px;width:26px;height:25.5px;background:#2b3342;border:1px solid #353e4e;border-radius:2px"></div>
<div class="b" style="left:303px;top:444.5px;width:26px;height:25.5px;background:#2b3342;border:1px solid #353e4e;border-radius:2px"></div>
<div class="b" style="left:336px;top:444.5px;width:26px;height:25.5px;background:#2b3342;border:1px solid #353e4e;border-radius:2px"></div>
<svg style="left:270px;top:444.5px" width="26" height="26" viewBox="0 0 26 26"><path d="M6 13.5 L10.5 18 L20 8.5" fill="none" stroke="#7ed321" stroke-width="2.3"/></svg>
<svg style="left:303px;top:444.5px" width="26" height="26" viewBox="0 0 26 26"><path d="M13 5.5 V20 M5.8 12.8 H20.2" fill="none" stroke="#12a6ee" stroke-width="2.6"/></svg>
<svg style="left:336px;top:444.5px" width="26" height="26" viewBox="0 0 26 26"><path d="M7 6.5 L19 19 M19 6.5 L7 19" fill="none" stroke="#f4431e" stroke-width="2.3"/></svg>

<div class="b" style="left:0;top:180px;width:32px;height:1px;background:#1b2a3b"></div>
<div class="b" style="left:0;top:181px;width:32px;height:48px;background:#162334"></div>
<div class="b" style="left:0;top:229px;width:32px;height:1px;background:#1b2a3b"></div>
<div class="b" style="left:0;top:183px;width:2px;height:46px;background:#1b86c6"></div>
<div class="b" style="left:5px;top:195px;width:22px;height:22px;background:#1b86c6"></div>
<svg style="left:0;top:136px" width="32" height="100" viewBox="0 136 32 100">
<rect x="8" y="152" width="7.2" height="4.4" fill="#fff"/>
<path d="M11.3 156 V165.6 H17 M11.3 159.6 H17" fill="none" stroke="#fff" stroke-width="1.5"/>
<rect x="17.4" y="157.6" width="6.2" height="3.6" fill="none" stroke="#fff" stroke-width="1.3"/>
<rect x="17.4" y="163.6" width="6.2" height="3.6" fill="none" stroke="#fff" stroke-width="1.3"/>
<g fill="none" stroke="#fff" stroke-width="1.3">
<rect x="9.4" y="200" width="5" height="5"/>
<rect x="9.4" y="207.6" width="5" height="5"/>
<rect x="17.6" y="207.6" width="5" height="5"/>
<path d="M20.1 198.6 L23.6 202.1 L20.1 205.6 L16.6 202.1 Z"/>
</g>
</svg>
<svg style="left:108px;top:324px" width="13" height="19" viewBox="0 0 13 19"><path d="M1 1 L1 15 L4.3 11.9 L6.8 17.6 L9 16.6 L6.6 11.1 L11 11.1 Z" fill="#fff" stroke="#000" stroke-width="1"/></svg>
<div class="b" style="left:376px;top:136px;width:1544px;height:25px;background:#525762;"></div>
<div class="b" style="left:376px;top:161px;width:1544px;height:864px;background:#fefefc;"></div>
<div class="b" style="left:1528px;top:138.2px;width:20px;height:19.6px;background:#1d2a3c;border-radius:2px"></div><div class="b" style="left:1551px;top:138.2px;width:58px;height:19.6px;background:#1d2a3c;border-radius:2px"></div><div class="b" style="left:1551.5px;top:138.2px;width:18.5px;height:19.6px;background:#1b86c6;border-radius:2px 0 0 2px"></div><div class="b" style="left:1621.8px;top:138.2px;width:75.8px;height:19.6px;background:#1d2a3c;border-radius:2px"></div><div class="b" style="left:1621.8px;top:138.2px;width:18.2px;height:19.6px;background:#1b86c6;border-radius:2px 0 0 2px"></div><div class="b" style="left:1710px;top:138.2px;width:118px;height:19.6px;background:#1d2a3c;border-radius:2px"></div><div class="b" style="left:1832px;top:138.2px;width:20px;height:19.6px;background:#1b86c6;border-radius:1px"></div><div class="b" style="left:1856px;top:138.2px;width:20px;height:19.6px;background:#1d2a3c;border-radius:2px"></div><div class="b" style="left:1879px;top:138.2px;width:20px;height:19.6px;background:#1b86c6;border-radius:1px"></div>
<div class="t" style="left:1767.8px;top:138.6px;height:18px;line-height:18px;font-size:12.1px;color:#fff;transform:translateX(-50%)">Select</div>
<svg style="left:1714px;top:140px" width="11" height="16" viewBox="0 0 11 16"><path d="M1.2 1.2 L1.2 11.6 L3.8 9.2 L5.6 13.4 L7.4 12.6 L5.6 8.6 L9 8.6 Z" fill="#fff"/></svg>
<svg style="left:1520px;top:136px" width="400" height="25" viewBox="1520 136 400 25">
<!-- auto sphere -->
<g fill="none" stroke="#868b95" stroke-width="1">
<path d="M1541 141.4 A6.8 6.8 0 1 0 1544.6 149.6"/>
<path d="M1531.3 148.4 C1535 150.6 1541 150.4 1544.6 148.2"/>
<path d="M1537 140.8 C1534.6 144 1534.8 151 1537.6 154.2"/>
</g>
<text x="1542.6" y="147.2" font-family="Liberation Sans, sans-serif" font-weight="bold" font-size="6.4" fill="#f0f0f0" text-anchor="middle">A</text>
<!-- shaded sphere w/ edges -->
<circle cx="1560.8" cy="147.6" r="7.6" fill="#b6b6b8" stroke="#fff" stroke-width="1.1"/>
<g fill="none" stroke="#fff" stroke-width="1"><path d="M1553.4 148.6 C1557 151 1564.6 150.8 1568.2 148.2"/><path d="M1559.8 140.2 C1556.8 144 1557 151.6 1560.2 155"/></g>
<!-- shaded sphere -->
<circle cx="1580.1" cy="147.6" r="7.7" fill="#b4b4ba"/>
<!-- wire sphere -->
<g fill="none" stroke="#e6e6e6" stroke-width="1"><circle cx="1599.2" cy="147.6" r="7.5"/><path d="M1591.8 148.6 C1595.4 151 1603 150.8 1606.6 148.2"/><path d="M1598.2 140.2 C1595.2 144 1595.4 151.6 1598.6 155"/></g>
<!-- selection modes -->
<rect x="1624.7" y="141.8" width="13" height="12.4" fill="none" stroke="#fff" stroke-width="1.1" stroke-dasharray="2.6 1.3"/>
<circle cx="1649.7" cy="147.8" r="6.5" fill="none" stroke="#f0f0f0" stroke-width="1.5" stroke-dasharray="1.3 1.42"/>
<path d="M1662.7 141.8 H1675.2 L1669.6 147.8 L1675.2 154.2 H1662.7 Z" fill="none" stroke="#e8e8e8" stroke-width="1.2" stroke-dasharray="2.2 1.3"/>
<path d="M1682 154.4 C1682.6 148 1684 143.6 1686 143.6 C1688.4 143.6 1688.6 150.6 1691 150.6 C1693.2 150.6 1694.2 146 1694.8 141.6" fill="none" stroke="#e8e8e8" stroke-width="1.2" stroke-dasharray="2 1.2"/>
<!-- L G -->
<circle cx="1842.1" cy="148" r="6.6" fill="none" stroke="#fff" stroke-width="1.3"/>
<path d="M1840.4 144.6 V151.2 H1844.2" fill="none" stroke="#fff" stroke-width="1.2"/>
<circle cx="1865.9" cy="148" r="6.6" fill="none" stroke="#fff" stroke-width="1.3"/>
<path d="M1868 145.8 V144.8 H1863.8 V151.2 H1868 V148.2 H1866" fill="none" stroke="#fff" stroke-width="1.2"/>
<!-- cube w/ cursor -->
<path d="M1889 141.2 L1895.4 144.2 V152 L1889 155.4 L1882.6 152 V144.2 Z" fill="#6f7076" stroke="#c9c9cc" stroke-width="0.7"/>
<path d="M1882.6 144.2 L1889 147.4 L1895.4 144.2 M1889 147.4 V155.4" fill="none" stroke="#c9c9cc" stroke-width="0.7"/>
<path d="M1889 141.2 L1895.4 144.2 L1889 147.4 L1882.6 144.2 Z" fill="#8c8d92"/>
<path d="M1889 147.4 L1895.4 144.2 V152 L1889 155.4 Z" fill="#4e4f55"/>
<path d="M1890.8 148.6 L1897.6 151.6 L1894.8 152.6 L1896.8 155.6 L1895.6 156.4 L1893.6 153.4 L1891.6 155.4 Z" fill="#f5a314"/>
</svg>
<svg style="left:376px;top:161px" width="1544" height="864" viewBox="376 161 1544 864">
<path d="M696.7 379.9 A812.6 812.6 0 0 1 1411 700" fill="none" stroke="#8b8b8b" stroke-width="1.7"/>
<path d="M696.5 580 A527.1 527.1 0 0 1 1121.5 886" fill="none" stroke="#8b8b8b" stroke-width="1.7"/>
<path d="M696 490 A670.4 670.4 0 0 1 1259.5 797" fill="none" stroke="#ff12c4" stroke-width="2.2"/>
<rect x="673.5" y="467.5" width="46" height="46" fill="#e9e9f4" fill-opacity="0.86" stroke="#b4bbf7" stroke-width="1.3"/>
<path d="M673.5 490.3 H719.5 M696.3 467.5 V513.5" stroke="#a9b3f8" stroke-width="1.9" fill="none"/>
<path d="M716.5 300.5 H696.5 V485" fill="none" stroke="#f4561f" stroke-width="1.2"/>
<circle cx="696" cy="490" r="4.6" fill="#6b6f86" stroke="#f23c14" stroke-width="2"/>
<path d="M692.5 490 H699.5 M696 486.5 V493.5" stroke="#9aa0c8" stroke-width="1"/>
<rect x="716" y="283.5" width="66" height="33" rx="16.5" fill="#fa6334"/>
<path d="M1280 608.5 H1259.5" fill="none" stroke="#f6a077" stroke-width="1.2"/><path d="M1259.5 608 V793" fill="none" stroke="#f4561f" stroke-width="1.2"/>
<circle cx="1259.8" cy="797.7" r="4.7" fill="none" stroke="#f23c14" stroke-width="2"/>
<rect x="1280" y="592" width="58" height="32" rx="16" fill="#fa6334"/>
<clipPath id="endclip"><rect x="1280" y="592" width="58" height="32" rx="16"/></clipPath>
<path d="M696.7 379.9 A812.6 812.6 0 0 1 1411 700" fill="none" stroke="#e2562b" stroke-width="1.5" clip-path="url(#endclip)"/>
<!-- view cube -->
<rect x="1851" y="955" width="39" height="38.5" fill="#d5d5d5"/>
<rect x="1848.3" y="955" width="3" height="39" fill="#7ecb73"/>
<rect x="1851" y="993" width="39" height="3.6" fill="#f4a08c"/>
<circle cx="1849.7" cy="995" r="5.2" fill="#232838"/>
<path d="M1849.7 995 L1849.7 990.5 A4.5 4.5 0 0 0 1845.8 992.7 Z" fill="#1f6b2a"/>
<path d="M1849.7 995 L1854.2 995 A4.5 4.5 0 0 0 1852 991.1 Z" fill="#8a2c22"/>
</svg>
<div class="t" style="left:751.2px;top:289.8px;height:22px;line-height:22px;font-size:16px;font-weight:bold;color:#fff;transform:translateX(-50%)">Start</div>
<div class="t" style="left:1311.8px;top:598px;height:22px;line-height:22px;font-size:16px;font-weight:bold;color:#fff;transform:translateX(-50%)">End</div>
<div class="t" style="left:1870.3px;top:961.6px;height:26px;line-height:26px;font-size:23.6px;font-weight:bold;color:#2b2e3c;transform:translateX(-50%)">T</div>

<div class="b" style="left:376px;top:1025px;width:1544px;height:20px;background:#282a39;"></div>
<div class="b" style="left:397.5px;top:1026px;width:119.5px;height:19px;background:#2d3640;"></div>
<div class="t" style="left:412.8px;top:1027.88px;height:15px;line-height:15px;font-size:11.3px;color:#f2f2f2;">Start Page</div>
<svg style="left:502px;top:1030.5px" width="9" height="9" viewBox="0 0 9 9"><path d="M1.7 1.7 L7.5 7.5 M7.5 1.7 L1.7 7.5" stroke="#f0f0f0" stroke-width="1.1"/></svg>
<div class="b" style="left:517px;top:1025px;width:121px;height:18px;background:#ffffff;"></div>
<div class="b" style="left:517px;top:1042.5px;width:121px;height:2.5px;background:#1e96dc;"></div>
<div class="t" style="left:534px;top:1027.88px;height:15px;line-height:15px;font-size:11.3px;color:#15151c;letter-spacing:0.15px;">Manual</div>
<svg style="left:623px;top:1030.5px" width="9" height="9" viewBox="0 0 9 9"><path d="M1.7 1.7 L7.5 7.5 M7.5 1.7 L1.7 7.5" stroke="#22222a" stroke-width="1.1"/></svg>
<div class="b" style="left:0px;top:1045px;width:600px;height:35px;background:#20222b;"></div>
<div class="b" style="left:600px;top:1045px;width:1320px;height:35px;background:#323a44;"></div>
<div class="t" style="left:24px;top:1044.11px;height:16px;line-height:16px;font-size:12.1px;color:#dfe1e5;letter-spacing:0.13px;">[10:45] [Info] Success Undo : Create Feature Sketch Entity</div>
<div class="t" style="left:24px;top:1063.11px;height:16px;line-height:16px;font-size:12.1px;color:#dfe1e5;letter-spacing:0.13px;">[10:46] [Info] Success Redo : Create Feature Sketch Entity</div>
<div class="b" style="left:584px;top:1053px;width:0;height:0;border-left:2.8px solid transparent;border-right:2.8px solid transparent;border-bottom:3.2px solid #f0f0f0"></div>
<div class="b" style="left:591px;top:1065px;width:6px;height:15px;background:#454a55;border-radius:3px 3px 0 0"></div>
<div class="b" style="left:820.7px;top:1053px;width:20.3px;height:20px;background:#1b86c6;"></div><div class="b" style="left:844.7px;top:1053px;width:20.3px;height:20px;background:#485260;"></div><div class="b" style="left:870px;top:1053px;width:17.700000000000045px;height:20px;background:#4a525e;border-radius:2px 0 0 2px"></div><div class="b" style="left:887.7px;top:1053px;width:95.29999999999995px;height:20px;background:#1d242c;border-radius:0 2px 2px 0"></div><div class="t" style="left:878.85px;top:1054.7px;height:18px;line-height:18px;font-size:11px;color:#f0f0f0;transform:translateX(-50%) scaleX(1.08)">X</div><div class="b" style="left:989.8px;top:1053px;width:18.200000000000045px;height:20px;background:#4a525e;border-radius:2px 0 0 2px"></div><div class="b" style="left:1008px;top:1053px;width:94.79999999999995px;height:20px;background:#1d242c;border-radius:0 2px 2px 0"></div><div class="t" style="left:998.9px;top:1054.7px;height:18px;line-height:18px;font-size:11px;color:#f0f0f0;transform:translateX(-50%) scaleX(1.08)">Y</div><div class="b" style="left:1109.8px;top:1053px;width:17.799999999999955px;height:20px;background:#4a525e;border-radius:2px 0 0 2px"></div><div class="b" style="left:1127.6px;top:1053px;width:95.40000000000009px;height:20px;background:#1d242c;border-radius:0 2px 2px 0"></div><div class="t" style="left:1118.6999999999998px;top:1054.7px;height:18px;line-height:18px;font-size:11px;color:#f0f0f0;transform:translateX(-50%) scaleX(1.08)">Z</div><div class="b" style="left:1229px;top:1053px;width:78.7px;height:20px;background:#39424e;border-radius:2px"></div><div class="b" style="left:1754.8px;top:1053px;width:79px;height:20px;background:#39424e;border-radius:2px"></div><div class="b" style="left:1840px;top:1053px;width:70px;height:20px;background:#39424e;border-radius:2px"></div>
<div class="t" style="left:1236px;top:1053.5px;height:18px;line-height:18px;font-size:12.3px;color:#e4e6ea">GCS</div>
<div class="t" style="left:1762px;top:1053.5px;height:18px;line-height:18px;font-size:12.8px;color:#e4e6ea">N</div>
<div class="t" style="left:1847px;top:1053.5px;height:18px;line-height:18px;font-size:12.8px;color:#e4e6ea">m</div>
<svg style="left:1294px;top:1060.5px" width="7" height="5" viewBox="0 0 7 5"><path d="M1 1 L3.5 3.5 L6 1" fill="none" stroke="#c8ccd2" stroke-width="1"/></svg>
<svg style="left:1820.5px;top:1060.5px" width="7" height="5" viewBox="0 0 7 5"><path d="M1 1 L3.5 3.5 L6 1" fill="none" stroke="#c8ccd2" stroke-width="1"/></svg>
<svg style="left:1896.5px;top:1060.5px" width="7" height="5" viewBox="0 0 7 5"><path d="M1 1 L3.5 3.5 L6 1" fill="none" stroke="#c8ccd2" stroke-width="1"/></svg>
<svg style="left:815px;top:1050px" width="60" height="28" viewBox="815 1050 60 28">
<circle cx="828.5" cy="1060.4" r="3" fill="none" stroke="#fff" stroke-width="1.9"/>
<circle cx="828.5" cy="1060.4" r="1" fill="#145f8e"/>
<path d="M831.6 1060.5 H836 M828.5 1063.6 V1068" stroke="#fff" stroke-width="1.3"/>
<path d="M835.2 1057.8 L838.4 1060.5 L835.2 1063.2 Z M825.8 1067 L828.5 1070.4 L831.2 1067 Z" fill="#fff"/>
<path d="M848.5 1068.6 L861 1056.5" stroke="#cfe0f4" stroke-width="1.2"/>
<path d="M861 1056.5 V1068.6 H848.5" fill="none" stroke="#fff" stroke-width="1.1" stroke-dasharray="1.6 1.2"/>
</svg>
</body>
</html>
